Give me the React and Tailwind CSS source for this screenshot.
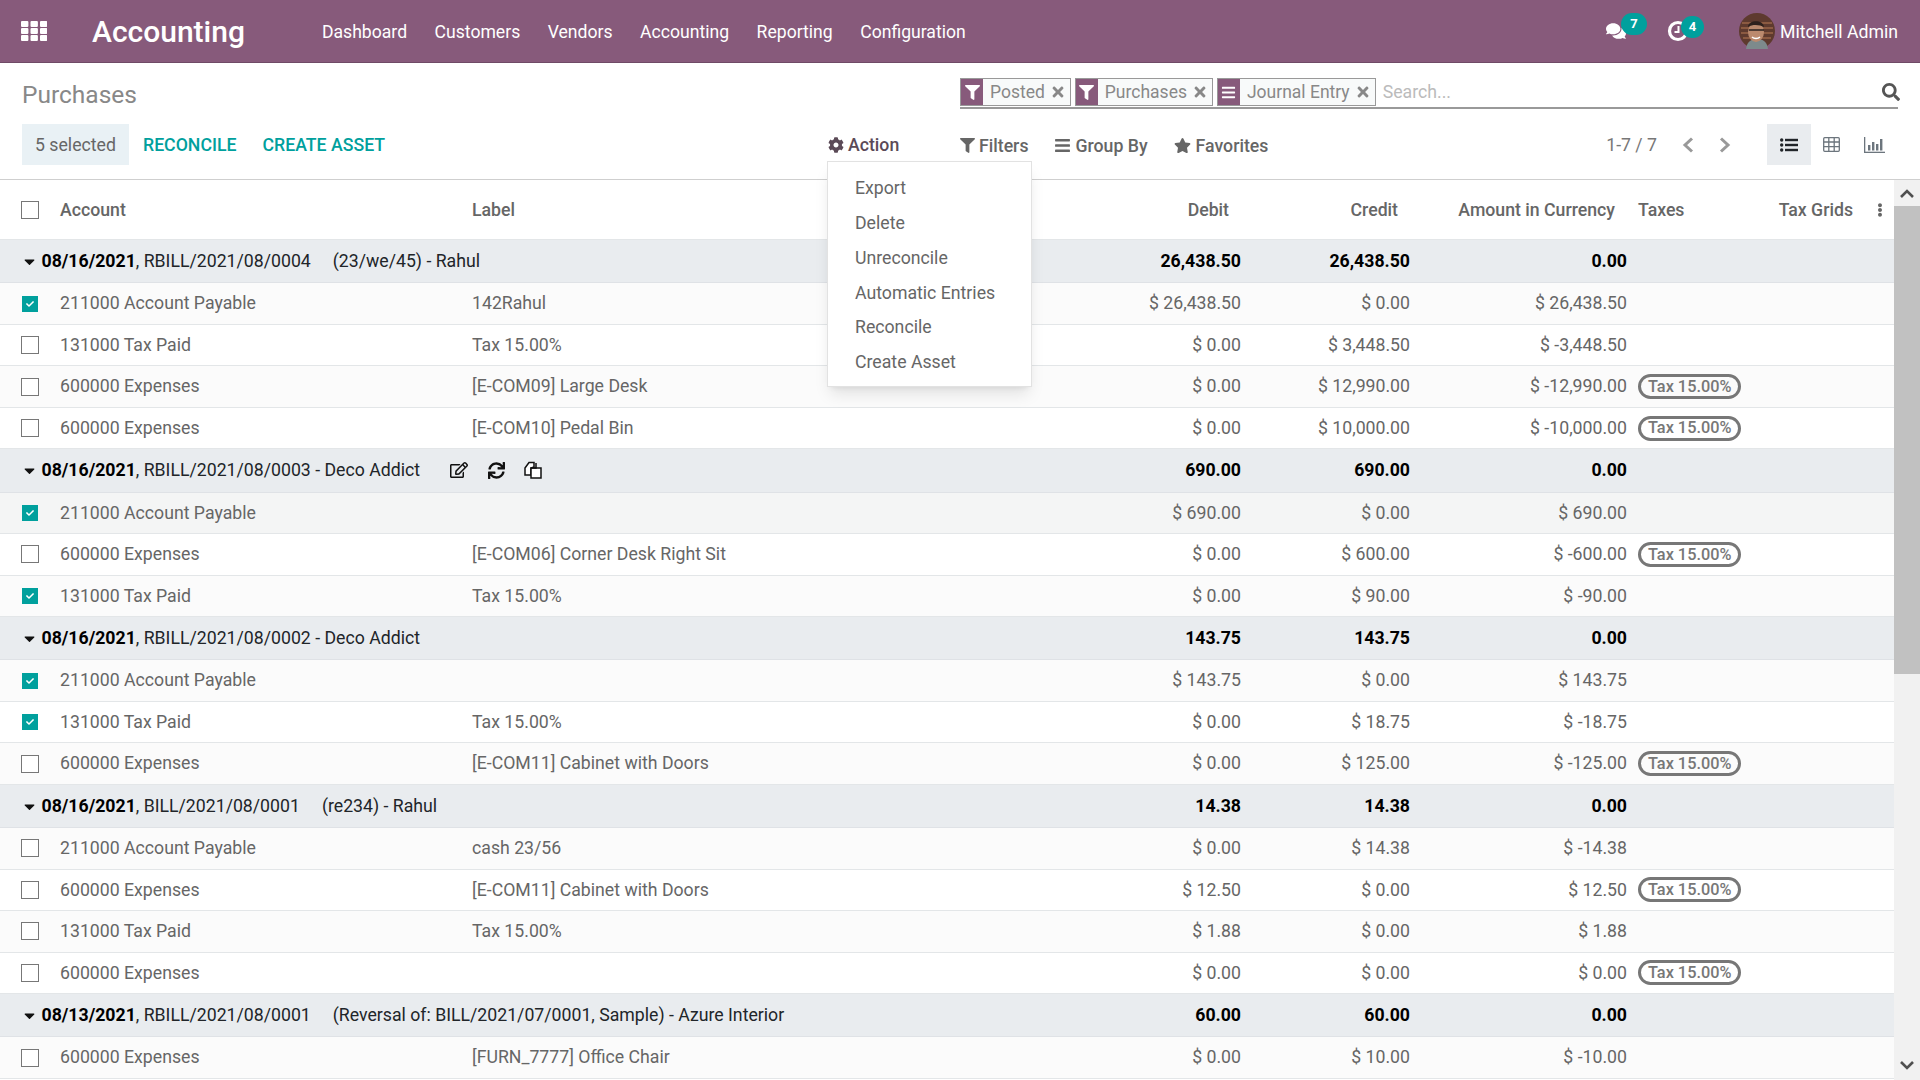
import React from "react";
import {
  FaFilter,
  FaBars,
  FaTimes,
  FaSearch,
  FaCog,
  FaStar,
  FaCaretDown,
  FaEllipsisV,
  FaRegEdit,
  FaSync,
  FaCheck,
  FaComments,
} from "react-icons/fa";

const COLS = "grid grid-cols-[60px_412px_628px_141px_169px_217px_1fr]";

const groups = [
  {
    date: "08/16/2021",
    ref: "RBILL/2021/08/0004",
    note: "(23/we/45) - Rahul",
    debit: "26,438.50",
    credit: "26,438.50",
    rows: [
      { on: true, acc: "211000 Account Payable", label: "142Rahul", d: "$ 26,438.50", c: "$ 0.00", a: "$ 26,438.50" },
      { acc: "131000 Tax Paid", label: "Tax 15.00%", d: "$ 0.00", c: "$ 3,448.50", a: "$ -3,448.50" },
      { acc: "600000 Expenses", label: "[E-COM09] Large Desk", d: "$ 0.00", c: "$ 12,990.00", a: "$ -12,990.00", tax: true },
      { acc: "600000 Expenses", label: "[E-COM10] Pedal Bin", d: "$ 0.00", c: "$ 10,000.00", a: "$ -10,000.00", tax: true },
    ],
  },
  {
    date: "08/16/2021",
    ref: "RBILL/2021/08/0003 - Deco Addict",
    debit: "690.00",
    credit: "690.00",
    actions: true,
    rows: [
      { on: true, hover: true, acc: "211000 Account Payable", label: "", d: "$ 690.00", c: "$ 0.00", a: "$ 690.00" },
      { acc: "600000 Expenses", label: "[E-COM06] Corner Desk Right Sit", d: "$ 0.00", c: "$ 600.00", a: "$ -600.00", tax: true },
      { on: true, acc: "131000 Tax Paid", label: "Tax 15.00%", d: "$ 0.00", c: "$ 90.00", a: "$ -90.00" },
    ],
  },
  {
    date: "08/16/2021",
    ref: "RBILL/2021/08/0002 - Deco Addict",
    debit: "143.75",
    credit: "143.75",
    rows: [
      { on: true, acc: "211000 Account Payable", label: "", d: "$ 143.75", c: "$ 0.00", a: "$ 143.75" },
      { on: true, acc: "131000 Tax Paid", label: "Tax 15.00%", d: "$ 0.00", c: "$ 18.75", a: "$ -18.75" },
      { acc: "600000 Expenses", label: "[E-COM11] Cabinet with Doors", d: "$ 0.00", c: "$ 125.00", a: "$ -125.00", tax: true },
    ],
  },
  {
    date: "08/16/2021",
    ref: "BILL/2021/08/0001",
    note: "(re234) - Rahul",
    debit: "14.38",
    credit: "14.38",
    rows: [
      { acc: "211000 Account Payable", label: "cash 23/56", d: "$ 0.00", c: "$ 14.38", a: "$ -14.38" },
      { acc: "600000 Expenses", label: "[E-COM11] Cabinet with Doors", d: "$ 12.50", c: "$ 0.00", a: "$ 12.50", tax: true },
      { acc: "131000 Tax Paid", label: "Tax 15.00%", d: "$ 1.88", c: "$ 0.00", a: "$ 1.88" },
      { acc: "600000 Expenses", label: "", d: "$ 0.00", c: "$ 0.00", a: "$ 0.00", tax: true },
    ],
  },
  {
    date: "08/13/2021",
    ref: "RBILL/2021/08/0001",
    note: "(Reversal of: BILL/2021/07/0001, Sample) - Azure Interior",
    debit: "60.00",
    credit: "60.00",
    rows: [
      { acc: "600000 Expenses", label: "[FURN_7777] Office Chair", d: "$ 0.00", c: "$ 10.00", a: "$ -10.00" },
    ],
  },
];

function AppsIcon() {
  return (
    <svg width="26" height="20" viewBox="0 0 26 20" fill="#fff">
      {[0, 9.5, 19].map((x) =>
        [0, 7, 14].map((y) => <rect key={x + "-" + y} x={x} y={y} width="7.4" height="6" rx="1" />)
      )}
    </svg>
  );
}

function ClockIcon() {
  return (
    <svg width="22" height="22" viewBox="0 0 22 22" fill="none" stroke="#fff">
      <circle cx="11" cy="11" r="8.5" strokeWidth="3.2" />
      <path d="M11.5 6v6H7.5" strokeWidth="2" />
    </svg>
  );
}

function Avatar() {
  return (
    <svg width="36" height="36" viewBox="0 0 36 36">
      <circle cx="18" cy="18" r="18" fill="#5e3a2e" />
      <path d="M3 10h30M2 15h32M2 20h32M4 25h28" stroke="#9a6548" strokeWidth="1.4" />
      <path d="M7 36c1-8 6-10 11-10s10 2 11 10z" fill="#7d8a8c" />
      <ellipse cx="17" cy="19" rx="8" ry="10" fill="#bb8a6e" />
      <path d="M9 14c0-7 15-8 16 0-4-2-11-3-16 0z" fill="#2e211d" />
      <path d="M10 17h6M19 17h6M16 17h3" stroke="#2b2322" strokeWidth="1.6" />
      <path d="M13 24c2 2 6 2 8 0" stroke="#fff" strokeWidth="1.4" fill="none" />
    </svg>
  );
}

function ListIcon() {
  return (
    <svg width="18" height="14" viewBox="0 0 18 14" fill="#212529">
      <circle cx="1.7" cy="2" r="1.7" />
      <circle cx="1.7" cy="7" r="1.7" />
      <circle cx="1.7" cy="12" r="1.7" />
      <rect x="5" y="0.8" width="13" height="2.4" />
      <rect x="5" y="5.8" width="13" height="2.4" />
      <rect x="5" y="10.8" width="13" height="2.4" />
    </svg>
  );
}

function TableIcon() {
  return (
    <svg width="17" height="15" viewBox="0 0 17 15" fill="none" stroke="#6c757d" strokeWidth="1.3">
      <rect x="0.7" y="0.7" width="15.6" height="13.6" rx="1" />
      <path d="M0.7 5h15.6M0.7 9.7h15.6M5.8 0.7v13.6M11.2 0.7v13.6" />
    </svg>
  );
}

function ChartIcon() {
  return (
    <svg width="21" height="16" viewBox="0 0 21 16" fill="#6c757d">
      <rect x="0" y="0" width="1.3" height="16" />
      <rect x="0" y="14.7" width="21" height="1.3" />
      <rect x="4" y="8" width="2.4" height="5.5" />
      <rect x="8" y="5" width="2.4" height="8.5" />
      <rect x="12" y="7" width="2.4" height="6.5" />
      <rect x="16" y="2" width="2.4" height="11.5" />
    </svg>
  );
}

function CopyIcon() {
  return (
    <svg width="18" height="18" viewBox="0 0 18 18" fill="#fff" stroke="#111" strokeWidth="1.5">
      <path d="M1 7l4-5.5h5V6L7 7v7H1z" />
      <path d="M7 7h5l5 0v10H7z" />
      <path d="M12 2v5H7" fill="none" />
    </svg>
  );
}

function Chevron({ dir }) {
  return (
    <svg width="12" height="16" viewBox="0 0 12 16" fill="none" stroke="#999" strokeWidth="3">
      <path d={dir === "left" ? "M10 1.5L3 8l7 6.5" : "M2 1.5L9 8l-7 6.5"} />
    </svg>
  );
}

function Chip({ icon, text }) {
  return (
    <div className="flex items-stretch h-[28px] border border-[#999] bg-[#f8fafa]">
      <span className="w-[22px] bg-[#875A7B] text-white flex items-center justify-center text-[15px]">{icon}</span>
      <span className="pl-[7px] pr-[5px] text-[#888] text-[17.5px] leading-[26px]">{text}</span>
      <span className="pr-[4px] flex items-center text-[#888] text-[16px]"><FaTimes /></span>
    </div>
  );
}

function Check({ on }) {
  if (on) {
    return (
      <span className="ml-[22px] w-[16px] h-[16px] bg-[#00A09D] flex items-center justify-center text-white text-[8px]">
        <FaCheck />
      </span>
    );
  }
  return <span className="ml-[21px] w-[18px] h-[18px] border-[1.5px] border-[#777] bg-white block" />;
}

function TaxPill() {
  return (
    <span className="inline-flex items-center h-[25px] px-[7px] pt-[1px] rounded-full border-[3px] border-[#777] text-[#777] text-[16.3px] font-medium">
      Tax 15.00%
    </span>
  );
}

function GroupRow({ g }) {
  return (
    <div className={COLS + " h-[43.3px] items-center bg-[#e9ecef] border-b border-[#dfe2e6] text-[#212529]"}>
      <div className="col-span-3 flex items-center pl-[24px]">
        <FaCaretDown className="text-[17px] w-[11px] text-[#111]" />
        <span className="ml-[6.5px] font-bold text-black">{g.date}</span>
        <span>, {g.ref}</span>
        {g.note && <span className="ml-[22px]">{g.note}</span>}
        {g.actions && (
          <span className="flex items-center ml-[30px] text-[#111]">
            <FaRegEdit className="text-[18px]" />
            <FaSync className="ml-[20px] text-[17px]" />
            <span className="ml-[19px]"><CopyIcon /></span>
          </span>
        )}
      </div>
      <div className="text-right font-bold text-black">{g.debit}</div>
      <div className="text-right font-bold text-black">{g.credit}</div>
      <div className="text-right font-bold text-black">0.00</div>
      <div />
    </div>
  );
}

function DataRow({ r, index }) {
  const bg = r.hover ? "bg-[#f4f5f5]" : index % 2 === 0 ? "bg-[#fbfbfb]" : "bg-white";
  return (
    <div className={COLS + " h-[41.5px] items-center border-b border-[#e3e6e8] text-[#666] " + bg}>
      <div className="flex items-center"><Check on={r.on} /></div>
      <div>{r.acc}</div>
      <div>{r.label}</div>
      <div className="text-right">{r.d}</div>
      <div className="text-right">{r.c}</div>
      <div className="text-right">{r.a}</div>
      <div className="pl-[11px] flex items-center">{r.tax && <TaxPill />}</div>
    </div>
  );
}

export default function App() {
  return (
    <div className="h-screen w-full overflow-hidden bg-white font-['Roboto',sans-serif] text-[17.7px] text-[#666]">
      <nav className="h-[63px] bg-[#875A7B] border-b border-[#6f4a66] flex items-center pl-[21px] pr-[22px] text-white">
        <AppsIcon />
        <span className="ml-[45px] text-[30px] font-medium">Accounting</span>
        <div className="ml-[77px] mt-[2px] flex gap-[27.5px] text-[17.6px]">
          <span>Dashboard</span>
          <span>Customers</span>
          <span>Vendors</span>
          <span>Accounting</span>
          <span>Reporting</span>
          <span>Configuration</span>
        </div>
        <div className="ml-auto flex items-center">
          <span className="relative w-[41px] h-[22px] flex items-center">
            <FaComments className="text-[20px]" />
            <span className="absolute left-[15px] top-[-7px] w-[26px] h-[22px] rounded-full bg-[#00A09D] text-[13px] font-bold flex items-center justify-center">7</span>
          </span>
          <span className="relative ml-[20px] w-[37px] h-[22px] flex items-center">
            <ClockIcon />
            <span className="absolute left-[14px] top-[-4px] w-[23px] h-[22px] rounded-full bg-[#00A09D] text-[13px] font-bold flex items-center justify-center">4</span>
          </span>
          <span className="ml-[35px]"><Avatar /></span>
          <span className="ml-[5px] mt-[2px]">Mitchell Admin</span>
        </div>
      </nav>

      <header className="h-[117px] border-b border-[#cfcfcf]">
        <div className="flex justify-between pt-[15px] pl-[22px] pr-[22px]">
          <h1 className="text-[24.5px] text-[#888] leading-[33px]">Purchases</h1>
          <div className="w-[938px] h-[31px] flex items-start border-b-2 border-[#999]">
            <div className="flex gap-[4px]">
              <Chip icon={<FaFilter />} text="Posted" />
              <Chip icon={<FaFilter />} text="Purchases" />
              <Chip icon={<FaBars />} text="Journal Entry" />
            </div>
            <span className="ml-[7px] text-[#bbb] leading-[28px]">Search...</span>
            <FaSearch className="ml-auto mr-[-2px] mt-[5px] text-[18px] text-[#555]" />
          </div>
        </div>

        <div className="flex items-center h-[41px] mt-[13px] pr-[35px]">
          <div className="w-[828px] flex items-center pl-[22px]">
            <span className="w-[107px] h-[41px] pt-[2px] bg-[#e9f1f5] flex items-center justify-center">5 selected</span>
            <span className="ml-[14px] mt-[2px] text-[#00A09D] font-medium">RECONCILE</span>
            <span className="ml-[26px] mt-[2px] text-[#00A09D] font-medium">CREATE ASSET</span>
          </div>
          <div className="relative w-[132px] h-[41px] pt-[1px] flex items-center text-[#5b4a57] font-medium">
            <FaCog className="text-[16px]" />
            <span className="ml-[4px]">Action</span>
            <div className="absolute z-10 left-[-1px] top-[37px] w-[205px] h-[226px] pt-[9px] pl-[27px] bg-white border border-[#e2e2e2] shadow-lg font-normal text-[#666]">
              {["Export", "Delete", "Unreconcile", "Automatic Entries", "Reconcile", "Create Asset"].map((x) => (
                <div key={x} className="h-[34.8px] flex items-center">{x}</div>
              ))}
            </div>
          </div>
          <div className="flex items-center mt-[3px] text-[#666] font-medium">
            <FaFilter className="text-[15px]" />
            <span className="ml-[4px]">Filters</span>
            <FaBars className="ml-[26px] text-[17px]" />
            <span className="ml-[4px]">Group By</span>
            <FaStar className="ml-[26px] text-[17px]" />
            <span className="ml-[5px]">Favorites</span>
          </div>
          <div className="ml-auto flex items-center">
            <span className="mt-[2px] text-[#777]">1-7 / 7</span>
            <span className="ml-[25px] flex"><Chevron dir="left" /></span>
            <span className="ml-[25px] flex"><Chevron dir="right" /></span>
            <span className="ml-[36px] w-[44px] h-[41px] bg-[#e9ecef] flex items-center justify-center"><ListIcon /></span>
            <span className="ml-[12px] flex"><TableIcon /></span>
            <span className="ml-[24px] flex"><ChartIcon /></span>
          </div>
        </div>
      </header>

      <div className="flex h-[900px]">
        <div className="flex-1 overflow-hidden">
          <div className={COLS + " h-[60px] pt-[1px] items-center border-b border-[#e3e6e8] font-medium text-[#666]"}>
            <div className="flex items-center"><Check /></div>
            <div>Account</div>
            <div>Label</div>
            <div className="text-right pr-[12px]">Debit</div>
            <div className="text-right pr-[12px]">Credit</div>
            <div className="text-right pr-[12px]">Amount in Currency</div>
            <div className="pl-[11px] flex items-center">
              <span>Taxes</span>
              <span className="ml-auto">Tax Grids</span>
              <FaEllipsisV className="ml-[20px] mr-[7px] text-[14px]" />
            </div>
          </div>
          {groups.map((g, i) => (
            <div key={i}>
              <GroupRow g={g} />
              {g.rows.map((r, j) => <DataRow key={j} r={r} index={j} />)}
            </div>
          ))}
        </div>
        <div className="w-[26px] bg-[#f1f1f1] flex flex-col text-[#555]">
          <div className="h-[26px] flex items-center justify-center">
            <svg width="14" height="9" viewBox="0 0 14 9" fill="none" stroke="#505050" strokeWidth="2.6"><path d="M1 8l6-6 6 6" /></svg>
          </div>
          <div className="h-[468px] bg-[#c1c1c1]" />
          <div className="mt-auto h-[28px] pb-[2px] flex items-center justify-center">
            <svg width="14" height="9" viewBox="0 0 14 9" fill="none" stroke="#505050" strokeWidth="2.6"><path d="M1 1l6 6 6-6" /></svg>
          </div>
        </div>
      </div>
    </div>
  );
}
